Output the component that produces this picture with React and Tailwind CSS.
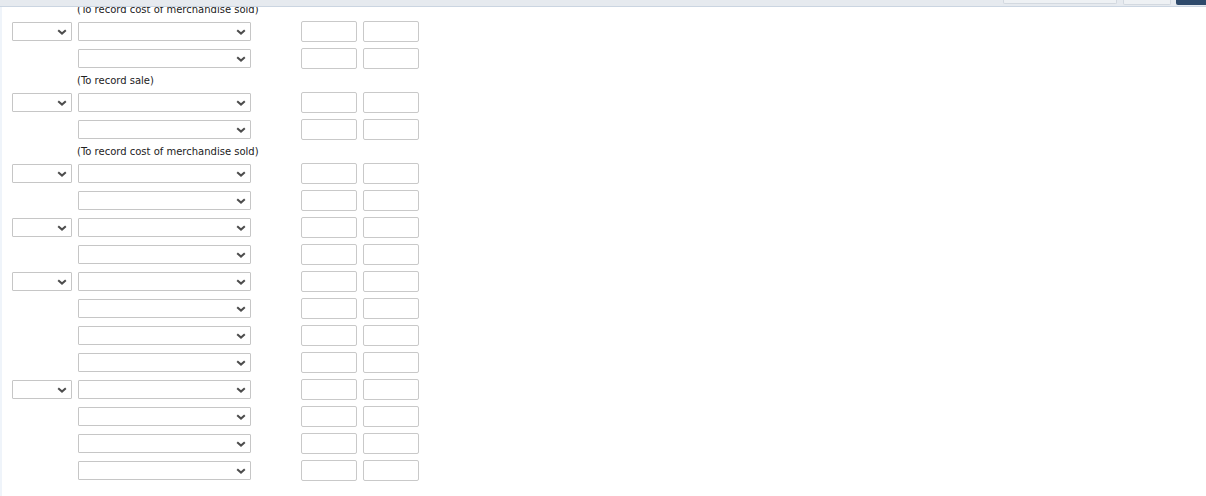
import React from 'react';

const rows = [
  { label: '(To record cost of merchandise sold)' },
  { small: true },
  { small: false },
  { label: '(To record sale)' },
  { small: true },
  { small: false },
  { label: '(To record cost of merchandise sold)' },
  { small: true },
  { small: false },
  { small: true },
  { small: false },
  { small: true },
  { small: false },
  { small: false },
  { small: false },
  { small: true },
  { small: false },
  { small: false },
  { small: false },
];

const Chevron = () => (
  <svg
    className="pointer-events-none absolute right-[5px] top-[7px]"
    width="10"
    height="6"
    viewBox="0 0 10 6"
  >
    <path d="M1.2 1.2 L5 4.6 L8.8 1.2" fill="none" stroke="#4d4d4d" strokeWidth="2" />
  </svg>
);

const Select = ({ width }) => (
  <div className={`relative h-[19px] ${width}`}>
    <select className="h-full w-full appearance-none rounded-[1px] border border-[#c6c6c6] bg-white outline-none" />
    <Chevron />
  </div>
);

const Box = () => (
  <input
    type="text"
    className="h-[21px] w-[56px] rounded-[2px] border border-[#c9c9c9] bg-white outline-none"
  />
);

export default function App() {
  return (
    <div className="relative min-h-screen bg-white font-['DejaVu_Sans',Verdana,sans-serif] text-[10px] text-[#222]">
      {/* sticky toolbar edge */}
      <div className="fixed left-0 right-0 top-0 z-10 flex h-[7px] items-start border-b border-[#cbd5e1] bg-[#e6eaef]">
        <div className="flex-1" />
        <div className="mr-[6px] h-[4px] w-[114px] rounded-b-[2px] border border-t-0 border-[#d3d9e0] bg-[#eef1f4]" />
        <div className="mr-[5px] h-[5px] w-[48px] rounded-b-[2px] border border-t-0 border-[#d3d9e0] bg-[#eef1f4]" />
        <div className="h-[5px] w-[30px] rounded-bl-[2px] bg-[#2e4a6b]" />
      </div>

      <div className="absolute bottom-0 left-0 top-[7px] w-[2px] bg-[#eff4fa]" />

      <div className="flex flex-col pt-[1px]">
        {rows.map((r, i) =>
          r.label ? (
            <div key={i} className="flex h-[17px] items-center pl-[77px] leading-none">
              {r.label}
            </div>
          ) : (
            <div key={i} className="flex h-[27px] items-center">
              <div className="ml-[12px] w-[60px]">{r.small && <Select width="w-[60px]" />}</div>
              <div className="ml-[6px]">
                <Select width="w-[173px]" />
              </div>
              <div className="ml-[50px] flex gap-[6px]">
                <Box />
                <Box />
              </div>
            </div>
          )
        )}
      </div>
    </div>
  );
}
